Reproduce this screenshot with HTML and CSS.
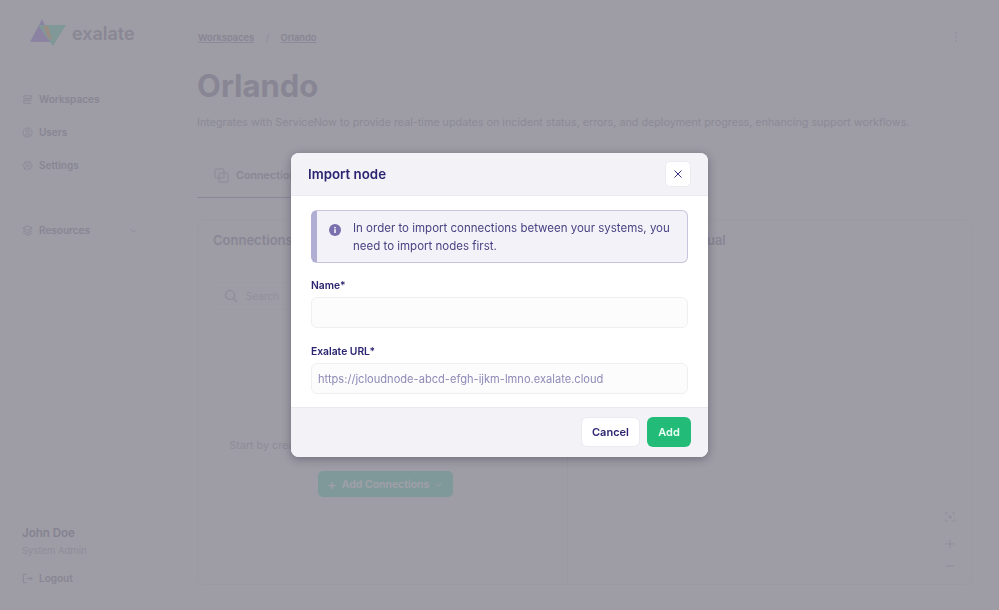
FILE: index.html
```html
<!DOCTYPE html>
<html lang="en">
<head>
<meta charset="utf-8">
<title>Import node</title>
<link rel="stylesheet" href="styles.css">
</head>
<body>
<div class="app">
  <aside class="sidebar">
    <div class="logo">
      <svg class="logo-mark" width="38" height="30" viewBox="0 0 38 30"><path d="M13 1 L24 24 H1 Z" fill="#dccff8"/><path d="M9 7 H37 L24 28 Z" fill="#c8f2e4"/><path d="M14 8 L19 8 L23 22 L19 20 Z" fill="#f4e0c9"/></svg>
      <span class="logo-text">exalate</span>
    </div>
    <nav class="nav">
      <a class="nav-item"><svg class="ico" viewBox="0 0 12 12"><path d="M2 2h8v3H2zM10 10H2V7h8M4 3.500h.1M8 8.500h.1"/></svg>Workspaces</a>
      <a class="nav-item"><svg class="ico" viewBox="0 0 12 12"><circle cx="6" cy="6" r="5"/><circle cx="6" cy="4.800" r="1.700"/><path d="M3 9.500c1-1.800 5-1.800 6 0"/></svg>Users</a>
      <a class="nav-item"><svg class="ico" viewBox="0 0 12 12"><path d="M6 1l1.300 1.500 2-.2.300 2L11 6l-1.400 1.700-.3 2-2-.2L6 11l-1.300-1.500-2 .2-.3-2L1 6l1.400-1.700.3-2 2 .2z"/><circle cx="6" cy="6" r="1.500"/></svg>Settings</a>
    </nav>
    <a class="nav-item resources"><svg class="ico" viewBox="0 0 12 12"><path d="M6 1l5 2.500-5 2.500-5-2.500zM1 6l5 2.500L11 6M1 8.500L6 11l5-2.500"/></svg>Resources<svg class="chev" viewBox="0 0 10 10"><path d="M2 4l3 3 3-3"/></svg></a>
    <div class="user">
      <div class="user-name">John Doe</div>
      <div class="user-role">System Admin</div>
      <a class="nav-item logout"><svg class="ico" viewBox="0 0 12 12"><path d="M5 1.500H1.500v9H5M5 6h6M9 4l2 2-2 2"/></svg>Logout</a>
    </div>
  </aside>
  <main class="main">
    <div class="topbar">
      <div class="crumbs"><a class="crumb">Workspaces</a><span class="sep">/</span><a class="crumb">Orlando</a></div>
      <svg class="dots" width="4" height="10" viewBox="0 0 4 10"><circle cx="2" cy="1" r="0.800"/><circle cx="2" cy="5" r="0.800"/><circle cx="2" cy="9" r="0.800"/></svg>
    </div>
    <h1 class="title">Orlando</h1>
    <p class="desc">Integrates with ServiceNow to provide real-time updates on incident status, errors, and deployment progress, enhancing support workflows.</p>
    <div class="tabs">
      <div class="tab"><svg class="tab-ico" viewBox="0 0 15 15"><rect x="1" y="1" width="9" height="9" rx="1"/><rect x="5" y="5" width="9" height="9" rx="1"/></svg>Connections</div>
    </div>
    <div class="panels">
      <section class="panel left">
        <h2 class="panel-title">Connections</h2>
        <div class="search"><svg class="search-ico" viewBox="0 0 14 14"><circle cx="6" cy="6" r="4.500"/><path d="M9.500 9.500L13 13"/></svg>Search</div>
        <div class="empty">
          <p class="empty-text">Start by creating your first connection between two systems</p>
          <div class="add-btn"><span class="plus">+</span>Add Connections<svg class="add-chev" viewBox="0 0 10 10"><path d="M2 4l3 3 3-3"/></svg></div>
        </div>
      </section>
      <section class="panel right">
        <h2 class="panel-title visual">Connections Visual</h2>
        <div class="zoom-tools">
          <svg class="zt fit" viewBox="0 0 12 12"><path d="M1 3V1h2M9 1h2v2M11 9v2H9M3 11H1V9"/><circle cx="6" cy="6" r="1.500"/></svg>
          <svg class="zt" viewBox="0 0 12 12"><path d="M6 1v10M1 6h10"/></svg>
          <svg class="zt" viewBox="0 0 12 12"><path d="M1 6h10"/></svg>
        </div>
      </section>
    </div>
  </main>
</div>
<div class="overlay">
  <div class="modal" role="dialog">
    <header class="modal-head">
      <h3 class="modal-title">Import node</h3>
      <button class="close" type="button"><svg width="10" height="10" viewBox="0 0 10 10"><path d="M1.500 1.500l7 7M8.500 1.500l-7 7"/></svg></button>
    </header>
    <div class="modal-body">
      <div class="notice">
        <svg class="info" width="12" height="12" viewBox="0 0 12 12"><circle cx="6" cy="6" r="6" fill="#7a70ae"/><rect x="5.200" y="5.200" width="1.600" height="3.800" fill="#f2f2f8"/><rect x="5.200" y="2.900" width="1.600" height="1.500" fill="#f2f2f8"/></svg>
        <p class="notice-text">In order to import connections between your systems, you need to import nodes first.</p>
      </div>
      <label class="field-label">Name*</label>
      <input class="field" type="text">
      <label class="field-label second">Exalate URL*</label>
      <input class="field" type="text" placeholder="https://jcloudnode-abcd-efgh-ijkm-lmno.exalate.cloud">
    </div>
    <footer class="modal-foot">
      <button class="btn cancel" type="button">Cancel</button>
      <button class="btn add" type="button">Add</button>
    </footer>
  </div>
</div>
</body>
</html>
```
FILE: styles.css
```css
* { box-sizing: border-box; }
html, body { margin: 0; height: 100%; overflow: hidden; }
body { font-family: Inter, "Noto Sans", sans-serif; background: #fafafc; color: #d8d6e0; }
.app { display: flex; height: 610px; }
.sidebar { width: 197px; flex: none; display: flex; flex-direction: column; padding: 0 0 25px 22px; }
.logo { display: flex; align-items: center; gap: 5px; margin: 18px 0 0 7px; height: 30px; }
.logo-text { font-size: 18px; font-weight: 600; color: #d8d6e0; }
.nav { display: flex; flex-direction: column; gap: 19px; margin-top: 44px; }
.nav-item { display: flex; align-items: center; gap: 6px; height: 14px; font-size: 10px; font-weight: 600; color: #d6d4e0; }
.ico { width: 11px; height: 11px; flex: none; fill: none; stroke: #d8d6e4; stroke-width: 1; }
.resources { margin-top: 51px; }
.chev { width: 9px; height: 9px; margin-left: 33px; fill: none; stroke: #dcdbe6; stroke-width: 1; }
.user { margin-top: auto; }
.user-name { font-size: 11.500px; font-weight: 600; color: #d0cedb; line-height: 16px; padding-top: 1px; }
.user-role { font-size: 9.500px; color: #e2e1ea; line-height: 14px; margin-top: 3px; }
.logout { margin-top: 13px; }
.main { flex: 1; min-width: 0; padding: 0 27px 25px 0; display: flex; flex-direction: column; }
.topbar { display: flex; justify-content: space-between; align-items: center; height: 16px; margin-top: 29px; padding-right: 14px; }
.crumbs { display: flex; align-items: center; font-size: 9.300px; font-weight: 600; color: #d6d4e0; padding-left: 1px; }
.crumb { text-decoration: underline; text-decoration-color: #dddcea; }
.sep { margin: 0 11.500px; font-weight: 400; color: #e0dfe8; }
.dots { fill: #dcdbe6; }
.title { margin: 14px 0 0; font-size: 31px; line-height: 54px; font-weight: 700; color: #d6d4e0; }
.desc { margin: 1px 0 0; font-size: 10.750px; line-height: 18px; color: #dcdbe5; white-space: nowrap; }
.tabs { margin-top: 22px; height: 44px; border-bottom: 1px solid #d8d6ec; width: 370px; flex: none; }
.tab { display: flex; align-items: center; gap: 7px; height: 43px; padding-left: 17px; font-size: 10.750px; font-weight: 600; color: #d8d6e0; }
.tab-ico { width: 15px; height: 15px; fill: none; stroke: #dcdbe6; stroke-width: 1; }
.panels { flex: 1; display: flex; margin-top: 21px; border: 1px solid #f6f6f9; border-radius: 6px; }
.panel { flex: 1; padding: 10px 15px 12px; position: relative; display: flex; flex-direction: column; }
.left { flex: 0 0 370px; border-right: 1px solid #f4f4f7; }
.panel-title { margin: 0; font-size: 13px; line-height: 20px; font-weight: 600; color: #d6d4e0; }
.visual { margin-left: 21px; }
.search { display: flex; align-items: center; gap: 8px; margin-top: 32px; height: 28px; padding-left: 10px; font-size: 10px; color: #e6e5ed; border: 1px solid #f7f7f9; border-radius: 6px; width: 200px; }
.search-ico { width: 14px; height: 14px; fill: none; stroke: #dcdbe6; stroke-width: 1.200; }
.empty { display: flex; flex-direction: column; align-items: center; margin-top: 127px; }
.empty-text { margin: 0; font-size: 10.750px; line-height: 18px; color: #dfdee7; white-space: nowrap; }
.add-btn { display: flex; align-items: center; height: 26px; margin: 16px 0 0 6px; padding: 0 10px 0 9px; border-radius: 5px; background: #c6f3ec; color: #fff; font-size: 10.500px; font-weight: 600; }
.plus { font-size: 15px; margin-right: 5px; font-weight: 400; }
.add-chev { width: 9px; height: 9px; margin-left: 5px; fill: none; stroke: #fff; stroke-width: 1; }
.zoom-tools { position: absolute; right: 16px; bottom: 13px; display: flex; flex-direction: column; gap: 12px; }
.fit { margin-bottom: 5px; }
.zt { width: 10px; height: 10px; fill: none; stroke: #dcdbe6; stroke-width: 1; }
.overlay { position: fixed; inset: 0; display: flex; align-items: center; justify-content: center; background: rgba(20, 18, 36, .4); backdrop-filter: blur(.5px); }
.modal { width: 417px; border-radius: 8px; overflow: hidden; background: #fff; box-shadow: 0 2px 10px rgba(20, 18, 50, .35); color: #2c2470; }
.modal-head { display: flex; justify-content: space-between; align-items: center; height: 43px; padding: 0 17px; background: #f2f2f7; border-bottom: 1px solid #e9e9f0; }
.modal-title { margin: 0; font-size: 13.300px; font-weight: 600; color: #2c2470; }
.close { width: 26px; height: 26px; padding: 0; display: flex; align-items: center; justify-content: center; background: #fff; border: 1px solid #eaeaf0; border-radius: 5px; }
.close path { fill: none; stroke: #3b3480; stroke-width: 1; }
.modal-body { padding: 14px 20px; height: 211px; }
.notice { display: flex; gap: 12px; height: 53px; padding: 8px 12px 0 12px; background: #f2f2f8; border: 1px solid #c6c4da; border-left: 6px solid #b1aed4; border-radius: 6px; }
.info { flex: none; margin-top: 5px; }
.notice-text { margin: 0; font-size: 11.500px; line-height: 18px; color: #4a4283; }
.field-label { display: block; margin-top: 15px; font-size: 10.300px; line-height: 14px; font-weight: 600; color: #2c2470; }
.second { margin-top: 16px; }
.field { display: block; width: 100%; height: 31px; margin-top: 5px; padding: 0 6px; background: #fcfcfd; border: 1px solid #efeff3; border-radius: 6px; font: inherit; font-size: 11.100px; outline: none; }
.field::placeholder { color: #8f8ab6; opacity: 1; }
.modal-foot { display: flex; justify-content: flex-end; gap: 7px; height: 50px; padding: 9px 17px; background: #f2f2f7; border-top: 1px solid #e9e9f0; }
.btn { height: 30px; border-radius: 6px; font: inherit; font-size: 11px; font-weight: 600; }
.cancel { width: 59px; background: #fff; border: 1px solid #eaeaf0; color: #2c2470; }
.add { width: 44px; background: #22bc78; border: 0; color: #eafff5; }
```
